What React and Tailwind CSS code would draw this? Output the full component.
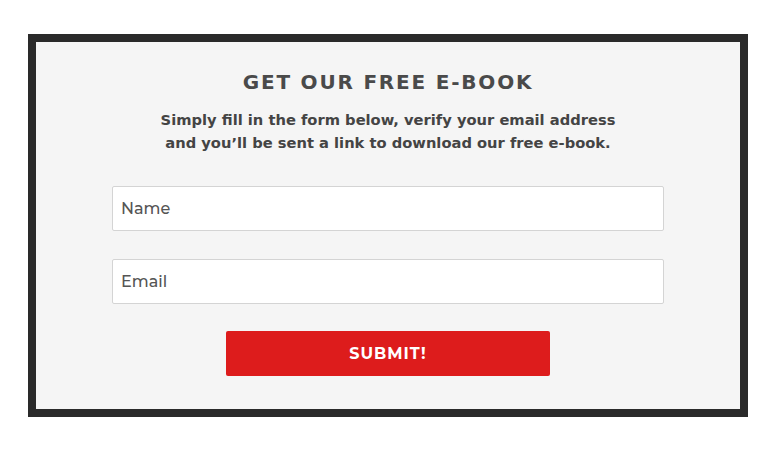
import React from "react";

const EbookForm = () => {
  return (
    <div className="w-[780px] h-[450px] bg-white pt-[34px] pl-[28px]">
      <div className="w-[720px] h-[383px] border-8 border-[#2a2a2a] bg-[#f5f5f5] flex flex-col items-center">
        <h2
          className="mt-[26px] text-[20px] leading-[28px] font-bold tracking-[1.8px] text-[#4a4a4a]"
          style={{ fontFamily: '"DejaVu Sans", Verdana, sans-serif' }}
        >
          GET OUR FREE E-BOOK
        </h2>
        <p
          className="mt-[12px] text-[14.7px] leading-[23px] font-bold text-[#444] text-center"
          style={{ fontFamily: '"DejaVu Sans", Verdana, sans-serif' }}
        >
          Simply fill in the form below, verify your email address
          <br />
          and you’ll be sent a link to download our free e-book.
        </p>

        <form className="mt-[32px] flex flex-col items-center" style={{ fontFamily: "Montserrat, Lato, sans-serif" }}>
          <input
            type="text"
            placeholder="Name"
            className="w-[552px] h-[45px] bg-white border border-[#d4d4d4] rounded-[2px] px-[8px] text-[16px] font-medium placeholder:text-[#555] outline-none"
          />
          <input
            type="email"
            placeholder="Email"
            className="mt-[28px] w-[552px] h-[45px] bg-white border border-[#d4d4d4] rounded-[2px] px-[8px] text-[16px] font-medium placeholder:text-[#555] outline-none"
          />
          <button
            type="button"
            className="mt-[27px] w-[324px] h-[45px] bg-[#dd1c1c] rounded-[2px] text-white font-bold text-[16px] tracking-[1px]"
          >
            SUBMIT!
          </button>
        </form>
      </div>
    </div>
  );
};

export default EbookForm;
